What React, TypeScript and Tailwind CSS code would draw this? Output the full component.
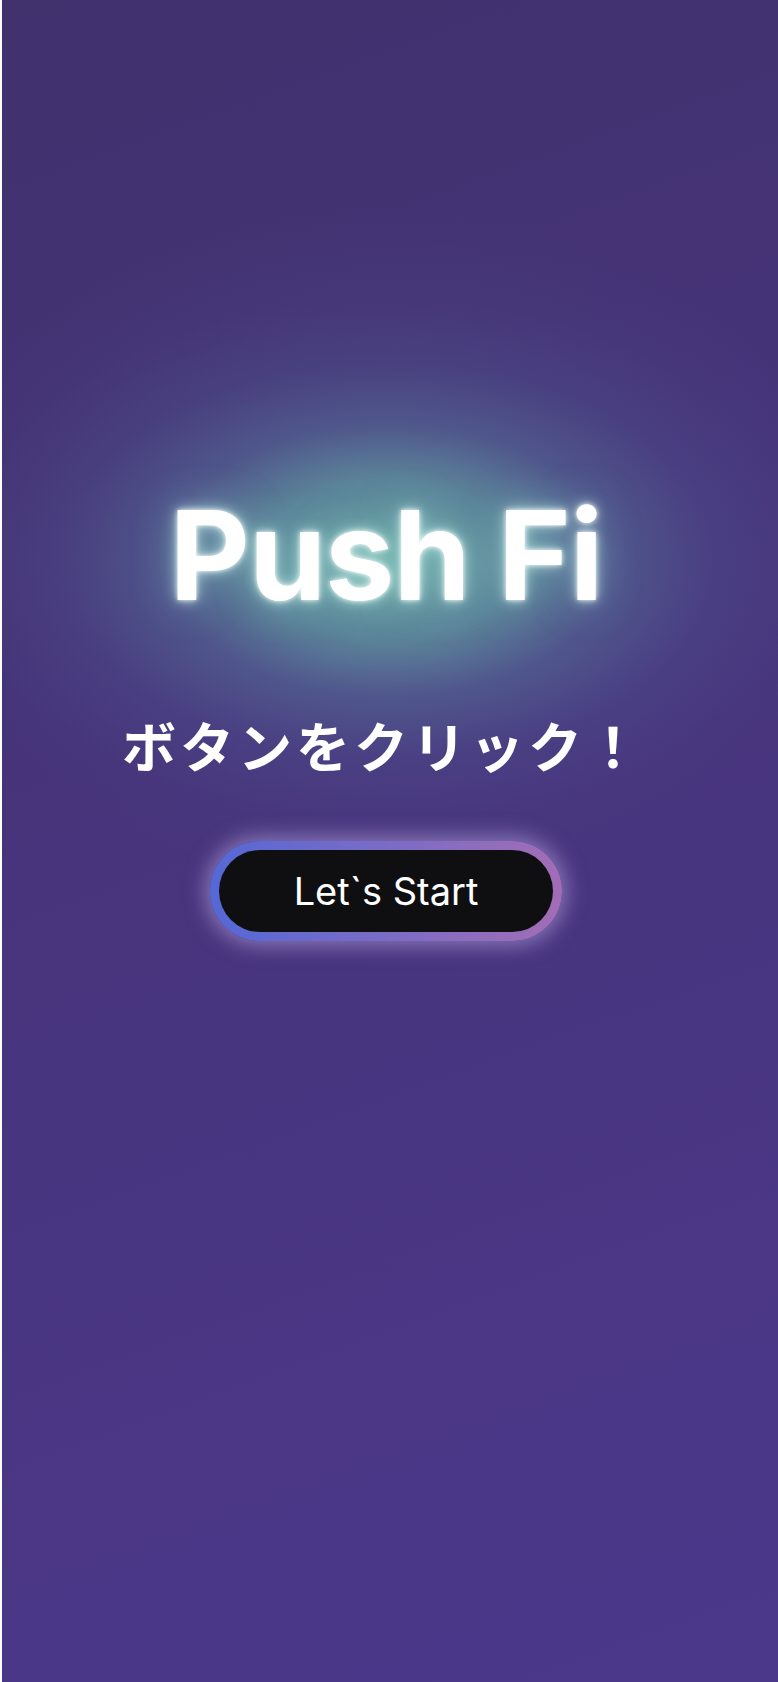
const App = () => {
  return (
    <div className="flex min-h-[1682px] w-full bg-white">
      <div className="w-[2px] shrink-0 bg-white" />
      <main className="relative flex flex-1 flex-col items-center bg-[linear-gradient(160deg,#41316d_0%,#47347c_45%,#4c388b_100%)] pt-[493px] pr-[8px]">
        {/* soft outer halo + teal glow behind the title */}
        <div className="pointer-events-none absolute inset-0 bg-[radial-gradient(ellipse_470px_340px_at_386px_545px,rgba(85,100,150,0.35)_0%,rgba(80,85,145,0.2)_60%,rgba(75,60,130,0)_100%)]" />
        <div className="pointer-events-none absolute inset-0 bg-[radial-gradient(ellipse_430px_260px_at_386px_560px,rgba(106,172,166,0.9)_0%,rgba(98,156,162,0.75)_30%,rgba(88,118,155,0.45)_52%,rgba(80,88,145,0.18)_76%,rgba(75,60,130,0)_100%)]" />
        <h1 className="relative text-[124px] leading-none font-bold tracking-[-1px] text-white font-['Inter','Liberation_Sans',sans-serif] [text-shadow:0_0_5px_rgba(255,255,255,0.9),0_0_14px_rgba(220,255,245,0.75),0_0_40px_rgba(150,230,215,0.5)]">
          Push Fi
        </h1>
        <p className="relative mt-[101px] text-[54px] leading-none font-bold tracking-[4px] text-white font-['Noto_Sans_CJK_JP',sans-serif] mr-[6px]">
          ボタンをクリック！
        </p>
        <div className="relative mt-[69px] rounded-full bg-[linear-gradient(90deg,#5568d6_0%,#7a6cc6_50%,#a26db6_100%)] p-[9px] shadow-[0_0_20px_5px_rgba(200,180,240,0.5)]">
          <button className="flex h-[82px] w-[334px] items-center justify-center rounded-full bg-[#0f0f12] text-[38px] text-white font-['Inter','Liberation_Sans',sans-serif]">
            Let`s Start
          </button>
        </div>
      </main>
    </div>
  );
};

export default App;
